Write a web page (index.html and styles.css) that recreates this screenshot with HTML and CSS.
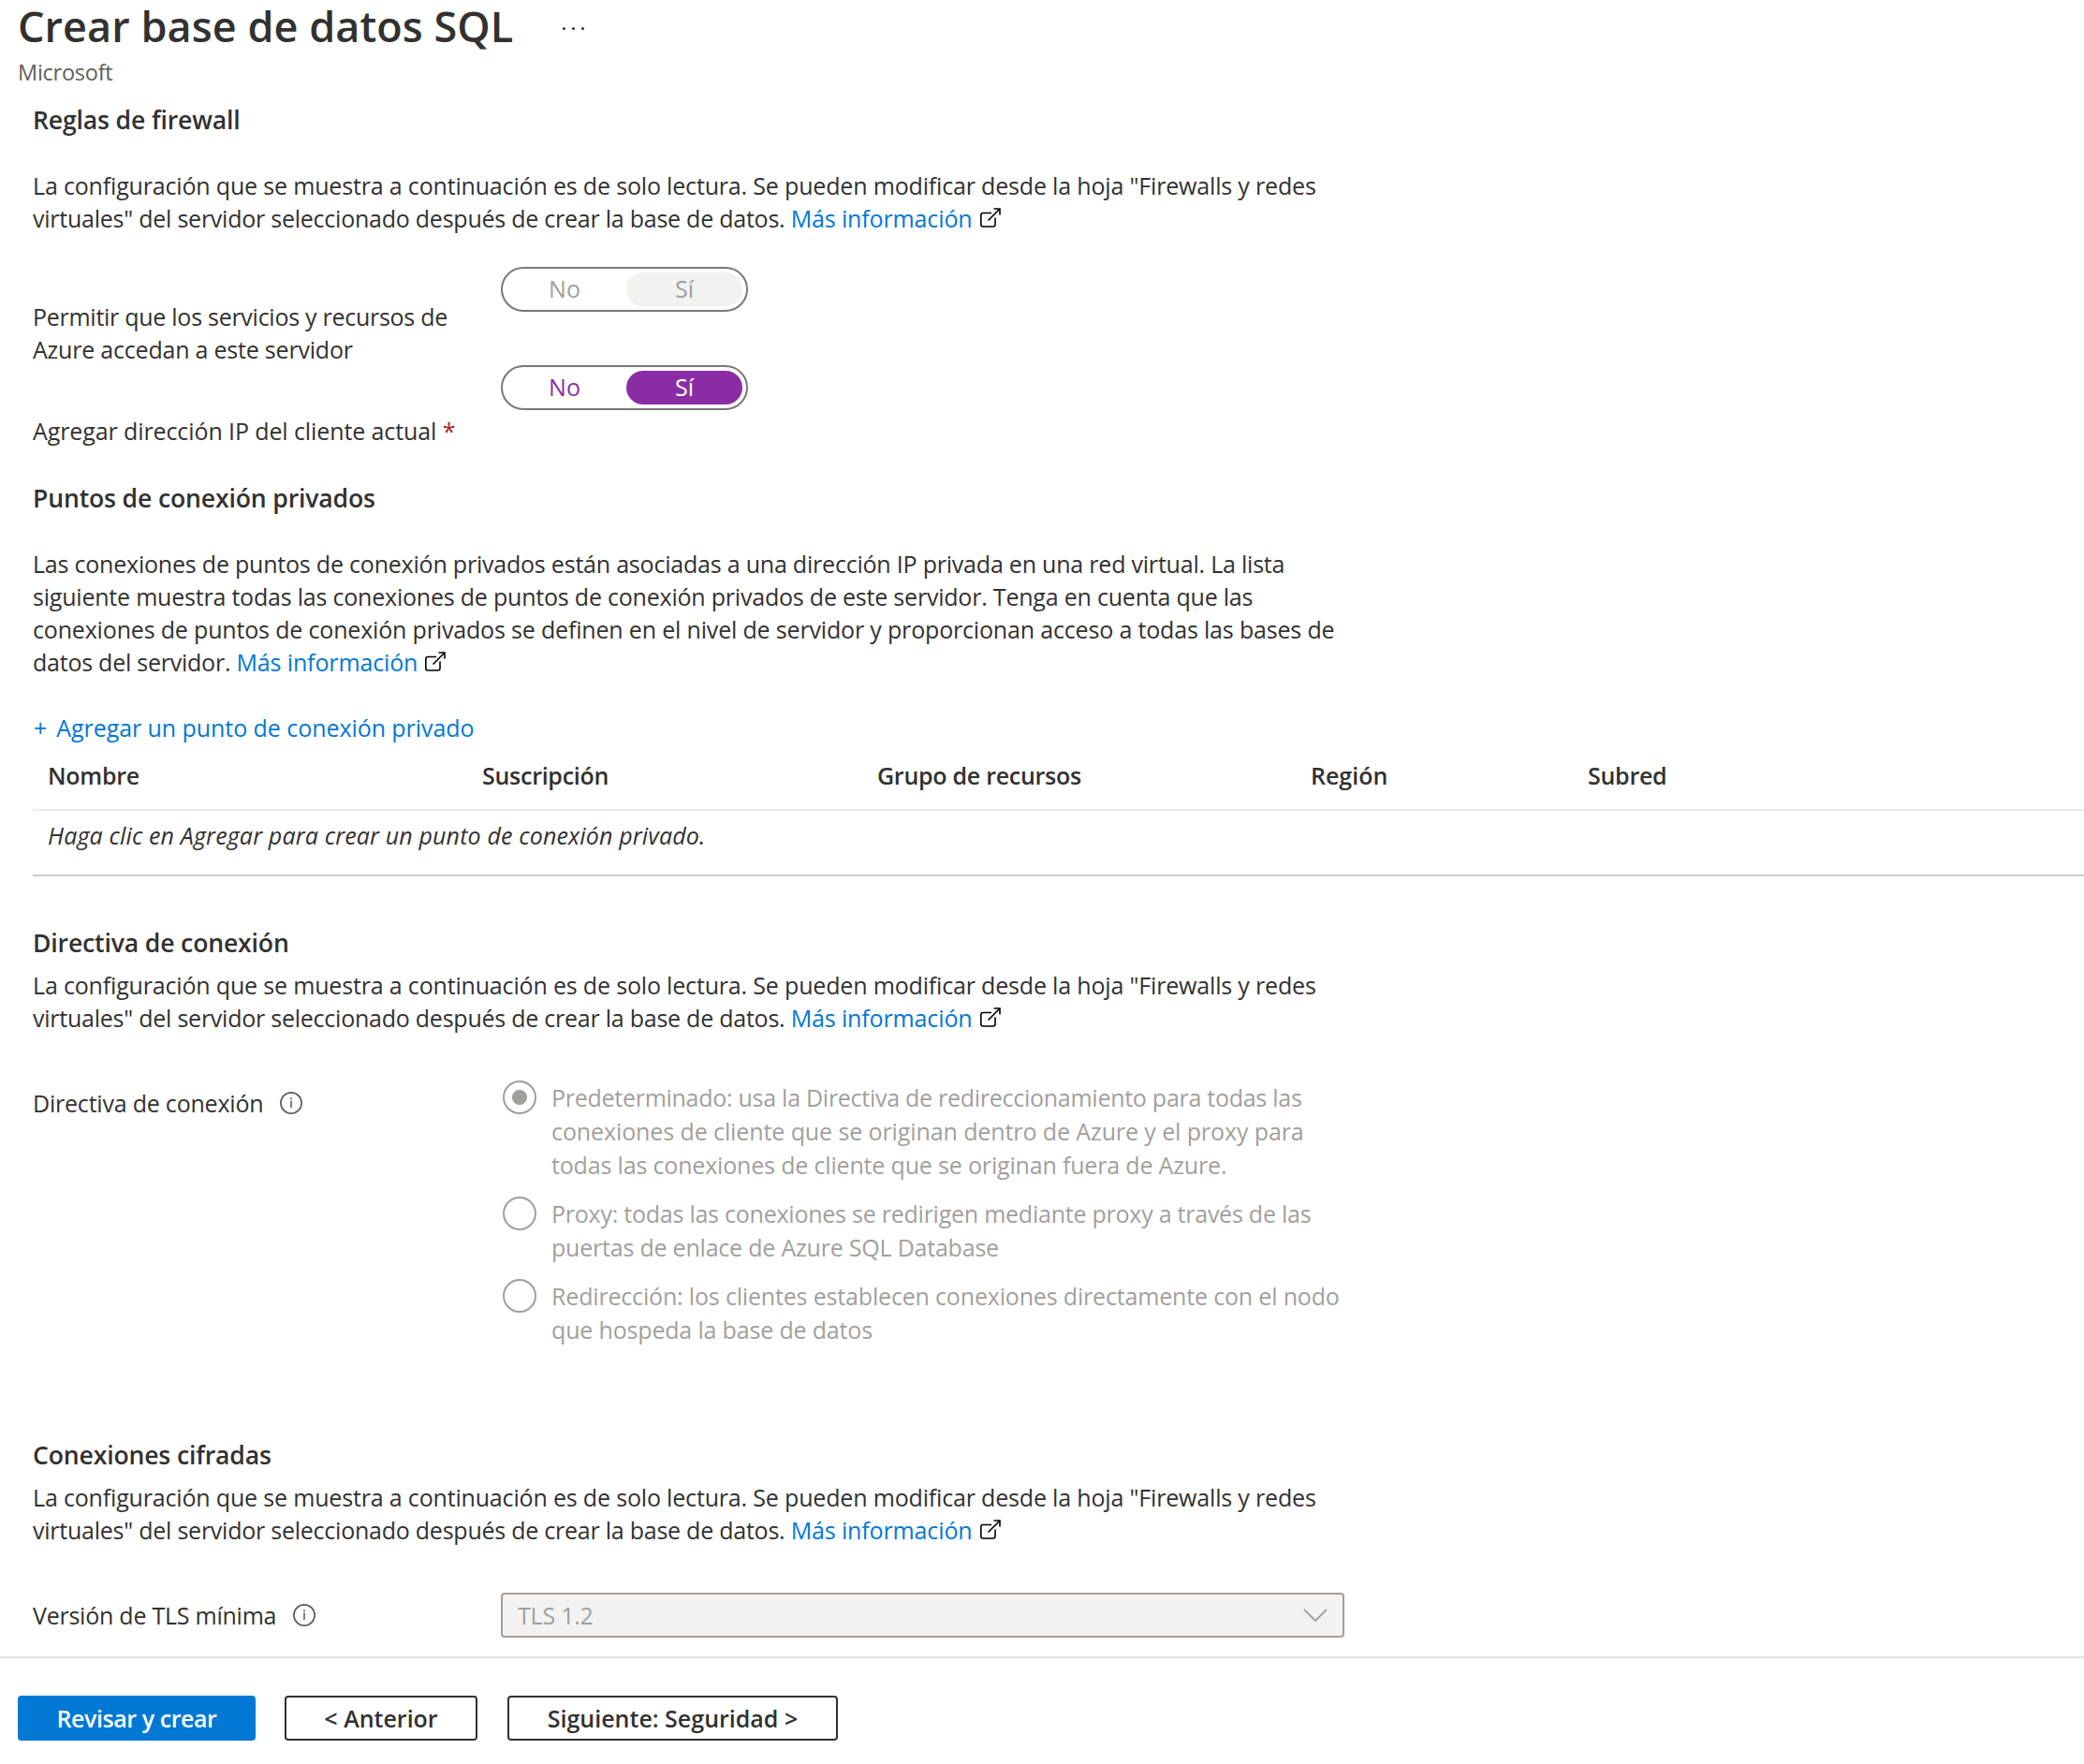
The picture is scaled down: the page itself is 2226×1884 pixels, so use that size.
FILE: index.html
```html
<!DOCTYPE html>
<html lang="es">
<head>
<meta charset="utf-8">
<title>Crear base de datos SQL</title>
<link rel="stylesheet" href="styles.css">
</head>
<body>
<svg class="sprite" aria-hidden="true">
  <symbol id="external" viewBox="0 0 22 21"><path d="M12 5.500H3A2.200 2.200 0 0 0 .8 7.700V17.800A2.200 2.200 0 0 0 3 20H13.800A2.200 2.200 0 0 0 16 17.800V10.500M14.500 1H21V7.500M21 1 8.500 13.500" fill="none" stroke="currentColor" stroke-width="1.6"/></symbol>
  <symbol id="info" viewBox="0 0 24 24"><circle cx="12" cy="12" r="11.100" fill="none" stroke="currentColor" stroke-width="1.7"/><path d="M12 9.500v7.500M12 6.200v2" stroke="currentColor" stroke-width="1.600"/></symbol>
</svg>
<header class="header">
  <div class="title-row">
    <h1 class="title">Crear base de datos SQL</h1>
    <button class="more" aria-label="Más"><i></i><i></i><i></i></button>
  </div>
  <p class="publisher">Microsoft</p>
</header>
<main class="content">
  <section class="section firewall">
    <h2 class="heading">Reglas de firewall</h2>
    <p class="text text-wide"><span class="loose">La configuración que se muestra a continuación es de solo lectura. Se pueden modificar desde la hoja "Firewalls y redes</span><br><span class="tight">virtuales" del servidor seleccionado después de crear la base de datos. </span><a class="link">Más información</a><svg class="external"><use href="#external"/></svg></p>
    <div class="field field-services">
      <label class="label"><span class="tighter">Permitir que los servicios y recursos de</span><br>Azure accedan a este servidor</label>
      <div class="toggle toggle-disabled"><span class="option">No</span><span class="option option-on">Sí</span></div>
    </div>
    <div class="field field-ip">
      <label class="label"><span class="looser">Agregar dirección IP del cliente actual <span class="required">*</span></span></label>
      <div class="toggle"><span class="option">No</span><span class="option option-on">Sí</span></div>
    </div>
  </section>
  <section class="section endpoints">
    <h2 class="heading">Puntos de conexión privados</h2>
    <p class="text text-wide">Las conexiones de puntos de conexión privados están asociadas a una dirección IP privada en una red virtual. La lista<br>siguiente muestra todas las conexiones de puntos de conexión privados de este servidor. Tenga en cuenta que las<br><span class="loose">conexiones de puntos de conexión privados se definen en el nivel de servidor y proporcionan acceso a todas las bases de</span><br><span class="tight">datos del servidor. </span><a class="link">Más información</a><svg class="external"><use href="#external"/></svg></p>
    <a class="link add"><span>+</span><span>Agregar un punto de conexión privado</span></a>
    <div class="table">
      <div class="table-head"><span>Nombre</span><span>Suscripción</span><span>Grupo de recursos</span><span class="region">Región</span><span>Subred</span></div>
      <div class="table-empty">Haga clic en Agregar para crear un punto de conexión privado.</div>
    </div>
  </section>
  <section class="section policy">
    <h2 class="heading">Directiva de conexión</h2>
    <p class="text"><span class="loose">La configuración que se muestra a continuación es de solo lectura. Se pueden modificar desde la hoja "Firewalls y redes</span><br><span class="tight">virtuales" del servidor seleccionado después de crear la base de datos. </span><a class="link">Más información</a><svg class="external"><use href="#external"/></svg></p>
    <div class="field field-lower">
      <label class="label">Directiva de conexión<svg class="info"><use href="#info"/></svg></label>
      <div class="radios">
        <div class="radio radio-on"><i class="mark"></i><p><span class="tighter">Predeterminado: usa la Directiva de redireccionamiento para todas las</span><br><span class="looser">conexiones de cliente que se originan dentro de Azure y el proxy para</span><br><span class="loose">todas las conexiones de cliente que se originan fuera de Azure.</span></p></div>
        <div class="radio"><i class="mark"></i><p><span class="tight">Proxy: todas las conexiones se redirigen mediante proxy a través de las</span><br>puertas de enlace de Azure SQL Database</p></div>
        <div class="radio"><i class="mark"></i><p><span class="loose">Redirección: los clientes establecen conexiones directamente con el nodo<br>que hospeda la base de datos</span></p></div>
      </div>
    </div>
  </section>
  <section class="section encrypted">
    <h2 class="heading">Conexiones cifradas</h2>
    <p class="text"><span class="loose">La configuración que se muestra a continuación es de solo lectura. Se pueden modificar desde la hoja "Firewalls y redes</span><br><span class="tight">virtuales" del servidor seleccionado después de crear la base de datos. </span><a class="link">Más información</a><svg class="external"><use href="#external"/></svg></p>
    <div class="field field-lower">
      <label class="label"><span class="tight">Versión de TLS mínima</span><svg class="info"><use href="#info"/></svg></label>
      <div class="select"><span>TLS 1.2</span><svg class="chevron" viewBox="0 0 26 15"><path d="M1 1 13 13 25 1" fill="none" stroke="currentColor" stroke-width="1.8"/></svg></div>
    </div>
  </section>
</main>
<footer class="footer">
  <button class="button button-primary">Revisar y crear</button>
  <button class="button button-previous">&lt; Anterior</button>
  <button class="button button-next">Siguiente: Seguridad &gt;</button>
</footer>
</body>
</html>
```

FILE: styles.css
```css
* { box-sizing: border-box; }

body {
  margin: 0;
  background: #fff;
  color: #323130;
  font: 25px/35px "Open Sans", "Noto Sans", sans-serif;
  letter-spacing: -0.21px;
}

h1, h2, p { margin: 0; }
button { font: inherit; color: inherit; background: none; border: 0; padding: 0; }
.sprite { display: none; }

/* Tracking adjustments for single lines */
.loose { letter-spacing: -0.17px; }
.looser { letter-spacing: -0.1px; }
.tight { letter-spacing: -0.24px; }
.tighter { letter-spacing: -0.27px; }

.header { padding: 1px 0 0 19px; height: 110px; }
.title-row { display: flex; align-items: flex-start; }
.title { font-size: 45px; line-height: 54px; font-weight: 600; letter-spacing: 0.06px; white-space: nowrap; }
.more { display: flex; gap: 7px; margin: 28px 0 0 53px; }
.more i { width: 3px; height: 3px; border-radius: 50%; background: #323130; }
.publisher { margin-top: 6px; font-size: 23.500px; line-height: 32px; color: #605e5c; letter-spacing: -0.25px; }

.content { padding-left: 35px; }
.heading { font-size: 26.600px; line-height: 36px; font-weight: 600; letter-spacing: -0.16px; }
.text { margin-top: 10px; white-space: nowrap; }
.text-wide { margin-top: 35px; }
.link { color: #0078d4; letter-spacing: -0.13px; }
.external { width: 22px; height: 21px; margin-left: 8px; vertical-align: 0; color: #000; }

.field { display: flex; }
.label { width: 500px; flex: none; white-space: nowrap; }
.field-services { margin-top: 34px; height: 105px; }
.field-services .label { padding-top: 36px; }
.field-ip .label { padding-top: 53px; }
.field-lower { margin-top: 49px; }
.field-lower .label { display: flex; align-items: flex-start; padding-top: 7px; }
.required { color: #a4262c; }
.info { width: 24px; height: 24px; margin: 5px 0 0 18px; color: #605e5c; }

.toggle {
  display: flex;
  align-items: center;
  justify-content: space-between;
  width: 264px;
  height: 48px;
  padding: 0 4px;
  border: 2px solid #7a7977;
  border-radius: 24px;
  color: #8a2da5;
  letter-spacing: 0;
}
.option { width: 124px; height: 36px; border-radius: 18px; text-align: center; }
.option-on { background: #8a2da5; color: #fff; }
.toggle-disabled { color: #a19f9d; }
.toggle-disabled .option-on { background: #f3f2f1; color: #a19f9d; }

.endpoints { margin-top: 36px; }
.add { display: flex; gap: 10px; margin-top: 35px; padding-left: 1px; letter-spacing: -0.06px; }
.table-head {
  display: grid;
  grid-template-columns: 464px 422px 463px 296px 1fr;
  padding: 16px 0 18px 16px;
  border-bottom: 2px solid #ebebeb;
  font-weight: 600;
  letter-spacing: -0.27px;
}
.region { letter-spacing: 0; }
.table-empty { padding: 9px 0 24px 16px; border-bottom: 2px solid #ccc; font-style: italic; letter-spacing: 0.15px; }

.policy { margin-top: 53px; }
.radios { display: flex; flex-direction: column; gap: 16px; color: #a19f9d; line-height: 36px; white-space: nowrap; }
.radio { display: flex; padding-left: 2px; gap: 16px; }
.mark { width: 36px; height: 36px; border: 2px solid #a19f9d; border-radius: 50%; }
.radio-on .mark { background: radial-gradient(circle, #a19f9d 7.500px, #fff 8.500px); }

.encrypted { margin-top: 98px; }
.select {
  display: flex;
  align-items: center;
  justify-content: space-between;
  width: 901px;
  height: 48px;
  padding: 0 16px;
  border: 2px solid #a19f9d;
  border-radius: 4px;
  background: #f3f2f1;
  color: #a19f9d;
}
.chevron { width: 26px; height: 15px; }

.footer { display: flex; margin-top: 20px; padding: 40px 0 0 19px; border-top: 2px solid #dfdfdf; }
.button { height: 48px; border: 2px solid #323130; border-radius: 4px; font-weight: 600; letter-spacing: 0; white-space: nowrap; }
.button-primary { width: 254px; border-color: #0078d4; background: #0078d4; color: #fff; letter-spacing: -0.43px; }
.button-previous { width: 206px; margin-left: 31px; }
.button-next { width: 353px; margin-left: 32px; }
```
